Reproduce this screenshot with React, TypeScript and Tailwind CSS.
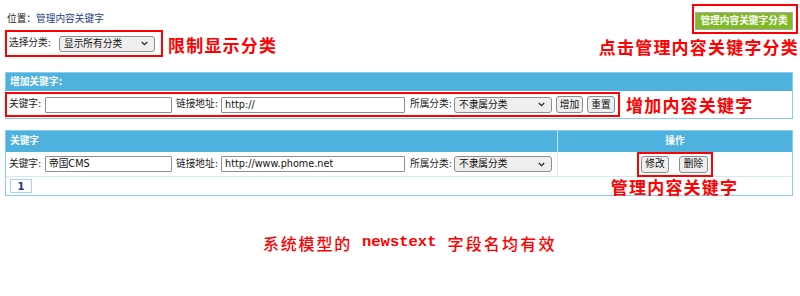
import React from "react";

const red = "text-[#ff0000] font-['Noto_Sans_CJK_SC',sans-serif] font-bold text-[17px] leading-[18px] tracking-[1.2px]";

function FakeSelect({ w, text }: { w: string; text: string }) {
  return (
    <div className={`flex h-[16px] ${w} items-center justify-between rounded-[3px] border border-[#8f8f8f] bg-[#efefef] pl-[4px] pr-[6px] text-[#111]`}>
      <span className="leading-[14px]">{text}</span>
      <svg width="7" height="5" viewBox="0 0 7 5" className="shrink-0">
        <path d="M0.8 1 L3.5 3.7 L6.2 1" fill="none" stroke="#222" strokeWidth="1.2" />
      </svg>
    </div>
  );
}

function Btn({ w, text }: { w: string; text: string }) {
  return (
    <div className={`flex h-[17px] ${w} items-center justify-center rounded-[3px] border border-[#8d8d8d] bg-[#efefef] text-[#111] leading-[14px]`}>
      {text}
    </div>
  );
}

function Field({ w, value }: { w: string; value: string }) {
  return (
    <div className={`flex h-[16px] ${w} items-center border border-[#8f8f8f] bg-white pl-[3px] text-[#111] leading-[14px] rounded-[1px]`}>
      {value}
    </div>
  );
}

function FormRow({ keyword, url }: { keyword: string; url: string }) {
  return (
    <>
      <span className="w-[36px] shrink-0">关键字:</span>
      <Field w="w-[127px]" value={keyword} />
      <span className="ml-[4px] w-[45px] shrink-0">链接地址:</span>
      <Field w="w-[184px]" value={url} />
      <span className="ml-[5px] w-[44px] shrink-0">所属分类:</span>
      <FakeSelect w="w-[98px]" text="不隶属分类" />
    </>
  );
}

export default function App() {
  return (
    <div className="flex h-[296px] w-[800px] flex-col overflow-hidden bg-white font-['DejaVu_Sans','Noto_Sans_CJK_SC',sans-serif] text-[9.7px] text-[#222]">
      {/* top */}
      <div className="flex h-[57px] justify-between">
        <div className="flex flex-col pl-[5px] pt-[13px]">
          <div className="h-[12px] pl-[2px] leading-[12px]">
            <span>位置：</span>
            <span className="text-[#1c3f82]">管理内容关键字</span>
          </div>
          <div className="mt-[5px] flex items-center">
            <div className="flex h-[27px] w-[158px] items-center border-2 border-[#ff0000] pl-[2px]">
              <span className="w-[50px] shrink-0">选择分类:</span>
              <FakeSelect w="w-[96px]" text="显示所有分类" />
            </div>
            <span className={`ml-[5px] mt-[3px] ${red}`}>限制显示分类</span>
          </div>
        </div>
        <div className="flex flex-col items-end pr-[2px] pt-[4px]">
          <div className="flex h-[30px] w-[106px] items-start border-2 border-[#ff0000] pl-[1px] pt-[6px]">
            <div className="flex h-[18px] w-[98px] items-center justify-center border border-[#a9a9a9] bg-[#80bb25] font-bold text-white leading-[14px]">
              管理内容关键字分类
            </div>
          </div>
          <span className={`-mr-[1px] mt-[4px] ${red}`}>点击管理内容关键字分类</span>
        </div>
      </div>

      {/* table 1 */}
      <div className="ml-[5px] mt-[15px] w-[788px] border border-[#89cdee]">
        <div className="flex h-[18px] items-center bg-[#4fb2de] pl-[4px] font-bold text-white">增加关键字:</div>
        <div className="flex h-[27px] items-center">
          <div className="-ml-px flex h-[25px] w-[615px] items-center border-2 border-[#ff0000] pl-[2px]">
            <FormRow keyword="" url="http://" />
            <div className="ml-[4px]">
              <Btn w="w-[27px]" text="增加" />
            </div>
            <div className="ml-[4px]">
              <Btn w="w-[28px]" text="重置" />
            </div>
          </div>
          <span className={`ml-[6px] ${red}`}>增加内容关键字</span>
        </div>
      </div>

      {/* table 2 */}
      <div className="ml-[5px] mt-[11px] w-[788px] border border-[#89cdee]">
        <div className="flex h-[21px] bg-[#4fb2de] font-bold text-white">
          <div className="flex w-[551px] items-center pl-[4px]">关键字</div>
          <div className="w-px bg-[#bfe4f6]" />
          <div className="flex flex-1 items-center justify-center">操作</div>
        </div>
        <div className="flex h-[24px]">
          <div className="flex w-[551px] items-center pl-[3px]">
            <FormRow keyword="帝国CMS" url="http://www.phome.net" />
          </div>
          <div className="w-px bg-[#cfe9f7]" />
          <div className="flex flex-1 items-center justify-center">
            <div className="flex h-[25px] w-[76px] items-center border-2 border-[#ff0000] pl-[2px]">
              <Btn w="w-[28px]" text="修改" />
              <div className="ml-[10px]">
                <Btn w="w-[29px]" text="删除" />
              </div>
            </div>
          </div>
        </div>
        <div className="h-px bg-[#cfe9f7]" />
        <div className="flex h-[18px] items-center">
          <div className="w-[551px] pl-[4px]">
            <div className="flex h-[14px] w-[22px] items-center justify-center border border-[#a5d5ef] text-[10px] font-bold text-[#1d3a7a]">
              1
            </div>
          </div>
          <div className="flex flex-1 justify-center pt-[1px]">
            <span className={red}>管理内容关键字</span>
          </div>
        </div>
      </div>

      {/* bottom note */}
      <div className="mt-[37px] flex h-[20px] items-center pl-[263px] text-[#ff0000]">
        <span className="font-['Noto_Sans_CJK_SC',sans-serif] text-[16px] font-medium tracking-[1.8px]">系统模型的</span>
        <span className="ml-[10px] font-['Liberation_Mono',monospace] text-[15.5px] font-bold">newstext</span>
        <span className="ml-[11px] font-['Noto_Sans_CJK_SC',sans-serif] text-[16px] font-medium tracking-[2.2px]">字段名均有效</span>
      </div>
    </div>
  );
}
